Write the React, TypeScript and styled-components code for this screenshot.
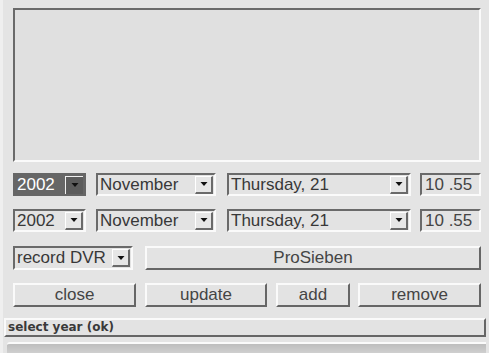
import React, { FC } from 'react';
import styled, { createGlobalStyle, css } from 'styled-components';

const GlobalStyle = createGlobalStyle`
  * { box-sizing: border-box; }
  html, body {
    margin: 0;
    background: #e4e4e4;
    font-family: "Liberation Sans", Arial, sans-serif;
  }
`;

const Window = styled.div`
  width: 489px;
  height: 353px;
  padding-top: 8px;
  display: flex;
  flex-direction: column;
  background: #e4e4e4;
  border-left: 3px solid #efefef;
  overflow: hidden;
`;

const Main = styled.div`
  display: flex;
  flex-direction: column;
  padding: 0 8px 0 10px;
`;

const sunken = css`
  border-top: 2px solid #6a6a6a;
  border-left: 2px solid #6a6a6a;
  border-bottom: 2px solid #fafafa;
  border-right: 2px solid #fafafa;
`;

const raised = css`
  border-top: 2px solid #fafafa;
  border-left: 2px solid #fafafa;
  border-bottom: 2px solid #666;
  border-right: 2px solid #666;
`;

const ListBox = styled.div`
  ${sunken};
  height: 154px;
  background: #e0e0e0;
`;

const Row = styled.div<{ $top: number; $height: number }>`
  display: flex;
  margin-top: ${(p) => p.$top}px;
  height: ${(p) => p.$height}px;
`;

const ComboBox = styled.div<{ $width: number; $gap: number; $selected?: boolean }>`
  ${sunken};
  width: ${(p) => p.$width}px;
  margin-right: ${(p) => p.$gap}px;
  display: flex;
  align-items: center;
  background: ${(p) => (p.$selected ? '#666' : '#e3e3e3')};
  color: ${(p) => (p.$selected ? '#fff' : '#383838')};
  ${(p) => p.$selected && 'border-color: #666;'}
  font-size: 17px;
`;

const ComboText = styled.span`
  flex: 1;
  padding-left: 2px;
  white-space: nowrap;
  overflow: hidden;
`;

const ArrowButton = styled.div<{ $selected?: boolean }>`
  width: 18px;
  height: 18px;
  margin-right: 1px;
  display: flex;
  align-items: center;
  justify-content: center;
  ${(p) =>
    p.$selected
      ? css`
          background: #5c5c5c;
          border-top: 1px solid #f0f0f0;
          border-left: 1px solid #f0f0f0;
        `
      : css`
          background: #e6e6e6;
          border-top: 1px solid #fff;
          border-left: 1px solid #fff;
          border-bottom: 2px solid #6a6a6a;
          border-right: 2px solid #6a6a6a;
        `}
`;

const TimeField = styled.div`
  ${sunken};
  flex: 1;
  display: flex;
  align-items: center;
  padding-left: 3px;
  font-size: 17px;
  color: #444;
  background: #e3e3e3;
`;

const Button = styled.div<{ $width?: number; $gap?: number }>`
  ${raised};
  ${(p) => (p.$width ? `width: ${p.$width}px;` : 'flex: 1;')}
  margin-right: ${(p) => p.$gap ?? 0}px;
  display: flex;
  align-items: center;
  justify-content: center;
  background: #e3e3e3;
  color: #454545;
  font-size: 17px;
`;

const StatusBar = styled.div`
  ${raised};
  margin: 11px 3px 0 1px;
  height: 20px;
  display: flex;
  align-items: center;
  padding-left: 2px;
  font-family: "DejaVu Sans", sans-serif;
  font-weight: bold;
  font-size: 12px;
  color: #3a3a3a;
  background: #e3e3e3;
`;

const BottomStrip = styled.div`
  margin: 5px 3px 0 4px;
  height: 12px;
  border-top: 2px solid #fafafa;
  background: linear-gradient(#bdbdbd, #cfcfcf);
  border-top-left-radius: 3px;
`;

const Arrow: FC = () => (
  <svg width="8" height="6" viewBox="0 0 8 6">
    <polygon points="0.5,1 7.5,1 4,5" fill="#111" />
  </svg>
);

interface ComboProps {
  value: string;
  width: number;
  gap: number;
  selected?: boolean;
}

const Combo: FC<ComboProps> = ({ value, width, gap, selected }) => (
  <ComboBox $width={width} $gap={gap} $selected={selected}>
    <ComboText>{value}</ComboText>
    <ArrowButton $selected={selected}>
      <Arrow />
    </ArrowButton>
  </ComboBox>
);

const DateRow: FC<{ top: number; selected?: boolean }> = ({ top, selected }) => (
  <Row $top={top} $height={23}>
    <Combo value="2002" width={73} gap={10} selected={selected} />
    <Combo value="November" width={120} gap={11} />
    <Combo value="Thursday, 21" width={184} gap={9} />
    <TimeField>10 .55</TimeField>
  </Row>
);

const App: FC = () => {
  return (
    <>
      <GlobalStyle />
      <Window>
        <Main>
          <ListBox />
          <DateRow top={11} selected />
          <DateRow top={13} />
          <Row $top={14} $height={24}>
            <Combo value="record DVR" width={120} gap={12} />
            <Button>ProSieben</Button>
          </Row>
          <Row $top={13} $height={24}>
            <Button $width={123} $gap={9}>close</Button>
            <Button $width={122} $gap={9}>update</Button>
            <Button $width={74} $gap={8}>add</Button>
            <Button>remove</Button>
          </Row>
        </Main>
        <StatusBar>select year (ok)</StatusBar>
        <BottomStrip />
      </Window>
    </>
  );
};

export default App;
